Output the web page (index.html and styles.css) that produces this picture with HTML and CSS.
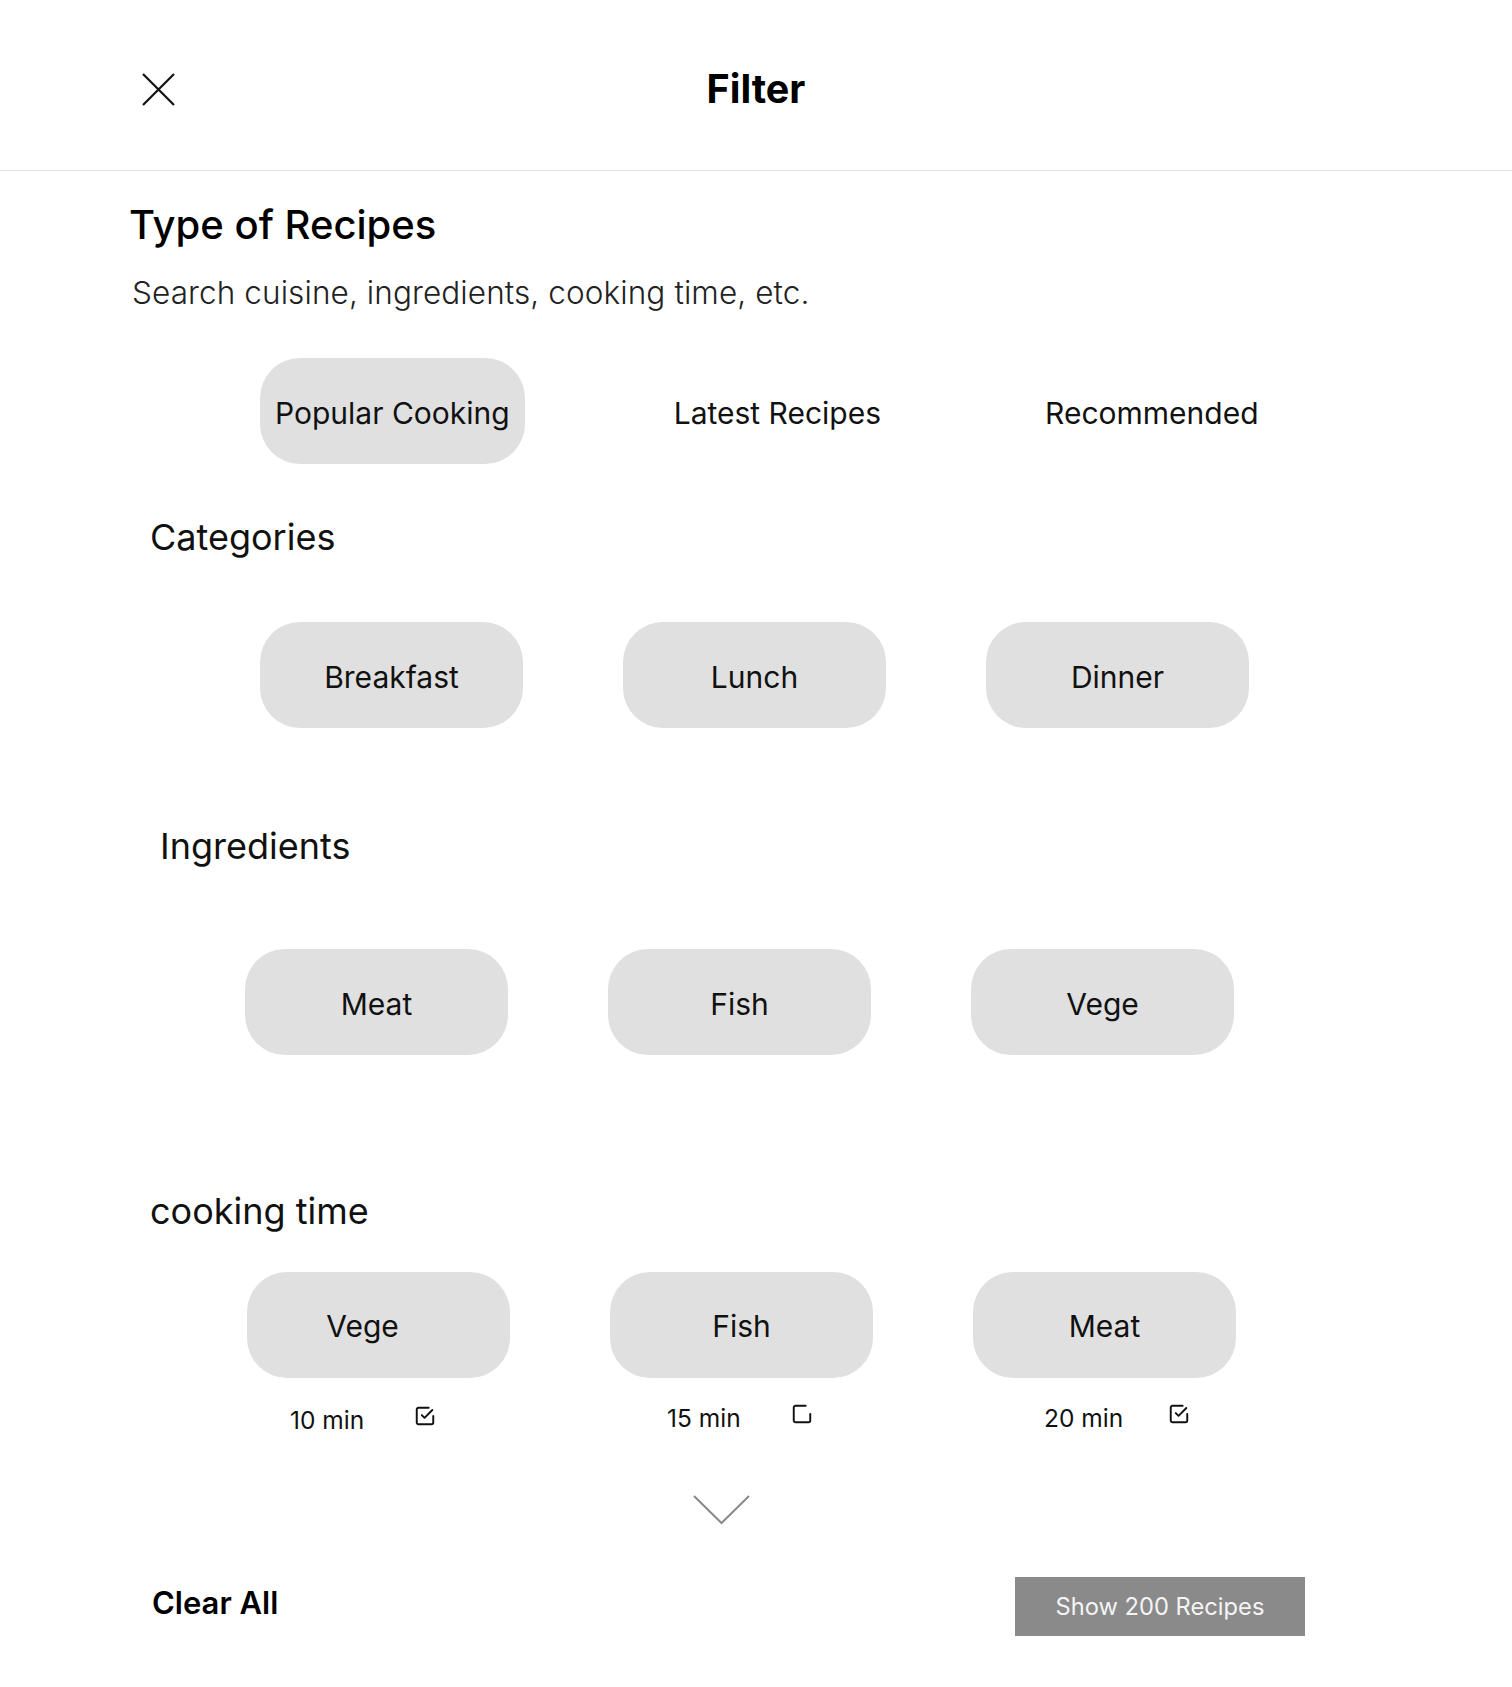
FILE: index.html
```html
<!DOCTYPE html>
<html lang="en">
<head>
<meta charset="utf-8">
<title>Filter</title>
<link rel="stylesheet" href="styles.css">
</head>
<body>
<div class="page">
  <header class="header">
    <button class="close" aria-label="Close">
      <svg width="33" height="33" viewBox="0 0 33 33"><path d="M1 1 L32 32 M32 1 L1 32" stroke="#111" stroke-width="2.2" fill="none"/></svg>
    </button>
    <h1 class="title">Filter</h1>
    <span></span>
  </header>

  <h2 class="section-title">Type of Recipes</h2>
  <p class="subtitle">Search cuisine, ingredients, cooking time, etc.</p>

  <div class="tabs">
    <span class="tab active">Popular Cooking</span>
    <span class="tab">Latest Recipes</span>
    <span class="tab">Recommended</span>
  </div>

  <h3 class="label label-categories">Categories</h3>
  <div class="row row-categories">
    <span class="pill">Breakfast</span>
    <span class="pill">Lunch</span>
    <span class="pill">Dinner</span>
  </div>

  <h3 class="label label-ingredients">Ingredients</h3>
  <div class="row row-ingredients">
    <span class="pill">Meat</span>
    <span class="pill">Fish</span>
    <span class="pill">Vege</span>
  </div>

  <h3 class="label label-time">cooking time</h3>
  <div class="row row-time">
    <span class="pill pill-offset">Vege</span>
    <span class="pill">Fish</span>
    <span class="pill">Meat</span>
  </div>

  <div class="times">
    <div class="time t1">
      <span class="time-text">10 min</span>
      <svg class="check" width="22" height="22" viewBox="0 0 24 24"><path d="M8.5 11l3 3L20 5.5" /><path d="M21 12v7a2 2 0 0 1-2 2H5a2 2 0 0 1-2-2V5a2 2 0 0 1 2-2h11"/></svg>
    </div>
    <div class="time t2">
      <span class="time-text">15 min</span>
      <svg class="check" width="22" height="22" viewBox="0 0 24 24"><path d="M21 12v7a2 2 0 0 1-2 2H5a2 2 0 0 1-2-2V5a2 2 0 0 1 2-2h11"/></svg>
    </div>
    <div class="time t3">
      <span class="time-text">20 min</span>
      <svg class="check" width="22" height="22" viewBox="0 0 24 24"><path d="M8.5 11l3 3L20 5.5" /><path d="M21 12v7a2 2 0 0 1-2 2H5a2 2 0 0 1-2-2V5a2 2 0 0 1 2-2h11"/></svg>
    </div>
  </div>

  <div class="more">
    <svg width="57" height="30" viewBox="0 0 57 30"><path d="M1 1 L28.5 28 L56 1" stroke="#8a8a8a" stroke-width="2" fill="none"/></svg>
  </div>

  <footer class="footer">
    <button class="clear">Clear All</button>
    <button class="show">Show 200 Recipes</button>
  </footer>
</div>
</body>
</html>
```

FILE: styles.css
```css
* { box-sizing: border-box; }

html, body {
  margin: 0;
  padding: 0;
  background: #ffffff;
}

body {
  font-family: Inter, "Noto Sans", "Liberation Sans", sans-serif;
  color: #111111;
}

.page {
  width: 1512px;
  min-height: 1687px;
}

.header {
  height: 171px;
  padding-top: 8px;
  border-bottom: 1px solid #e3e3e3;
  display: grid;
  grid-template-columns: 1fr auto 1fr;
  align-items: center;
}

.close {
  justify-self: start;
  margin-left: 142px;
  padding: 0;
  border: 0;
  background: none;
  display: flex;
  width: 33px;
  height: 33px;
}

.title {
  margin: 0;
  font-size: 39.5px;
  font-weight: 700;
  line-height: 46px;
  color: #000;
}

.section-title {
  margin: 31px 0 0 129px;
  font-size: 40px;
  font-weight: 500;
  line-height: 46px;
  color: #000;
}

.subtitle {
  margin: 25px 0 0 132px;
  font-size: 31.5px;
  font-weight: 300;
  letter-spacing: 0.1px;
  line-height: 40px;
  color: #222;
}

.tabs {
  margin-top: 45px;
  padding-left: 260px;
  display: flex;
  gap: 134px;
}

.tab {
  height: 106px;
  padding: 4px 15px 0;
  border-radius: 40px;
  display: flex;
  align-items: center;
  font-size: 30px;
  font-weight: 400;
  color: #111;
}

.tab.active {
  background: #e0e0e0;
}

.label {
  margin: 0;
  font-size: 36px;
  font-weight: 400;
  line-height: 44px;
  color: #111;
}

.label-categories { margin-top: 51px; padding-left: 150px; }
.label-ingredients { margin-top: 96px; padding-left: 160px; }
.label-time { margin-top: 134px; padding-left: 150px; }

.row {
  display: flex;
  gap: 100px;
}

.row-categories { margin-top: 63px; padding-left: 260px; }
.row-ingredients { margin-top: 81px; padding-left: 245px; }
.row-time { margin-top: 39px; padding-left: 247px; }

.pill {
  width: 263px;
  height: 106px;
  padding-top: 4px;
  border-radius: 40px;
  background: #e0e0e0;
  display: flex;
  align-items: center;
  justify-content: center;
  font-size: 30px;
  font-weight: 400;
  color: #111;
}

.row-time .pill { padding-top: 2px; }
.row-time .pill-offset { padding-right: 32px; }

.times {
  margin-top: 25px;
  padding-left: 290px;
  display: flex;
  height: 30px;
}

.time {
  width: 377px;
  display: flex;
  align-items: center;
}

.time-text {
  width: 124px;
  font-size: 24.5px;
  line-height: 30px;
  color: #111;
}

.t1 { padding-top: 3px; }

.check {
  fill: none;
  stroke: #111;
  stroke-width: 2.1;
  stroke-linecap: round;
  stroke-linejoin: round;
  margin-top: -8px;
}

.more {
  margin-top: 62px;
  padding-left: 693px;
  display: flex;
  height: 30px;
}

.footer {
  margin-top: 52px;
  padding-left: 152px;
  padding-right: 207px;
  display: flex;
  align-items: center;
}

.clear {
  padding: 0;
  margin-top: -8px;
  border: 0;
  background: none;
  font-family: inherit;
  font-size: 31px;
  font-weight: 600;
  color: #000;
}

.show {
  margin-left: auto;
  width: 290px;
  height: 59px;
  border: 0;
  background: #8a8a8a;
  font-family: inherit;
  font-size: 23.7px;
  font-weight: 400;
  color: #f4f4f4;
}
```
